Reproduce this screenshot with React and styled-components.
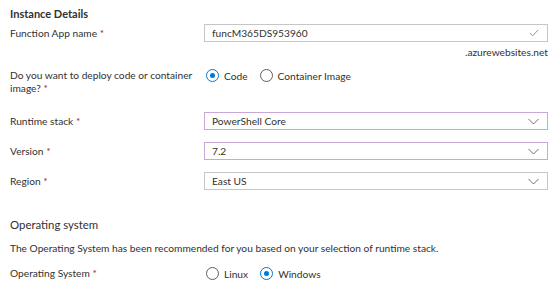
import React from "react";
import styled, { createGlobalStyle } from "styled-components";

const GlobalStyle = createGlobalStyle`
  body {
    margin: 0;
    background: #ffffff;
    font-family: Lato, "Open Sans", sans-serif;
    color: #323130;
  }
`;

const Page = styled.div`
  width: 560px;
  height: 290px;
  padding: 5px 12px 0 10px;
  box-sizing: border-box;
  font-size: 10.2px;
`;

const SectionTitle = styled.div`
  font-size: ${({ $bold }) => ($bold ? "11px" : "11.4px")};
  font-weight: ${({ $bold }) => ($bold ? 700 : 400)};
  line-height: 18px;
  margin-top: ${({ $top }) => $top || 0}px;
`;

const Row = styled.div`
  display: grid;
  grid-template-columns: 194px 1fr;
  align-items: ${({ $top }) => ($top ? "start" : "center")};
  margin-top: ${({ $gap }) => $gap || 0}px;
`;

const Label = styled.div`
  line-height: 13px;
  padding-right: 4px;
`;

const Line = styled.span`
  display: block;
  white-space: nowrap;
`;

const Req = styled.span`
  color: #a4262c;
`;

const Field = styled.div`
  position: relative;
  height: 18px;
  border: 1px solid ${({ $tone }) => ($tone === "purple" ? "#c9a7d8" : "#c8c6c4")};
  box-sizing: border-box;
  display: flex;
  align-items: center;
  padding: 0 8px 0 7px;
  justify-content: space-between;
`;

const FieldText = styled.span`
  line-height: 16px;
`;

const Suffix = styled.div`
  text-align: right;
  line-height: 13px;
  margin-top: 4px;
`;

const Radios = styled.div`
  display: flex;
  align-items: center;
  padding-left: 2px;
`;

const RadioOption = styled.label`
  display: flex;
  align-items: center;
  margin-right: 12px;
`;

const Circle = styled.span`
  width: 11px;
  height: 11px;
  border-radius: 50%;
  border: 1px solid ${({ $on }) => ($on ? "#0078d4" : "#605e5c")};
  display: inline-flex;
  align-items: center;
  justify-content: center;
  margin-right: 5px;
  box-sizing: content-box;

  &::after {
    content: "";
    width: 5px;
    height: 5px;
    border-radius: 50%;
    background: ${({ $on }) => ($on ? "#0078d4" : "transparent")};
  }
`;

const Description = styled.div`
  line-height: 14px;
  margin-top: 7px;
`;

const Check = () => (
  <svg width="10" height="8" viewBox="0 0 10 8">
    <path d="M1 4.2 L3.7 6.8 L9 1" fill="none" stroke="#6bb56b" strokeWidth="1" />
  </svg>
);

const Chevron = () => (
  <svg width="11" height="7" viewBox="0 0 11 7">
    <path d="M0.5 1 L5.5 6 L10.5 1" fill="none" stroke="#605e5c" strokeWidth="0.9" />
  </svg>
);

const Radio = ({ on, children }) => (
  <RadioOption>
    <Circle $on={on} />
    {children}
  </RadioOption>
);

const Select = ({ value, tone }) => (
  <Field $tone={tone}>
    <FieldText>{value}</FieldText>
    <Chevron />
  </Field>
);

export default function App() {
  return (
    <>
      <GlobalStyle />
      <Page>
        <SectionTitle $bold>Instance Details</SectionTitle>
        <Row $gap={1}>
          <Label>
            Function App name <Req>*</Req>
          </Label>
          <Field>
            <FieldText>funcM365DS953960</FieldText>
            <Check />
          </Field>
        </Row>
        <Row>
          <div />
          <Suffix>.azurewebsites.net</Suffix>
        </Row>
        <Row $top $gap={10}>
          <Label>
            <Line>Do you want to deploy code or container</Line>
            <Line>
              image? <Req>*</Req>
            </Line>
          </Label>
          <Radios>
            <Radio on>Code</Radio>
            <Radio>Container Image</Radio>
          </Radios>
        </Row>
        <Row $gap={17}>
          <Label>
            Runtime stack <Req>*</Req>
          </Label>
          <Select value="PowerShell Core" tone="purple" />
        </Row>
        <Row $gap={12}>
          <Label>
            Version <Req>*</Req>
          </Label>
          <Select value="7.2" tone="purple" />
        </Row>
        <Row $gap={12}>
          <Label>
            Region <Req>*</Req>
          </Label>
          <Select value="East US" />
        </Row>
        <SectionTitle $top={26}>Operating system</SectionTitle>
        <Description>
          The Operating System has been recommended for you based on your selection of runtime stack.
        </Description>
        <Row $gap={12}>
          <Label>
            Operating System <Req>*</Req>
          </Label>
          <Radios>
            <Radio>Linux</Radio>
            <Radio on>Windows</Radio>
          </Radios>
        </Row>
      </Page>
    </>
  );
}
